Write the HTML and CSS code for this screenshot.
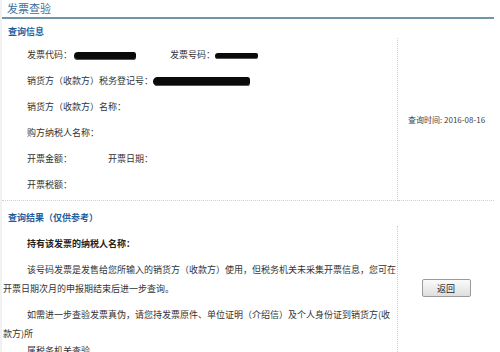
FILE: index.html
```html
<!DOCTYPE html>
<html lang="zh">
<head>
    <meta charset="UTF-8">
    <title>发票查验</title>
    <link rel="stylesheet" href="styles.css">
</head>
<body>
    <div class="page">
        <div class="title">发票查验</div>

        <div class="section">
            <div class="sec-head">查询信息</div>
            <div class="sec-body">
                <div class="main info">
                    <div class="row">
                        <span class="field field-code">发票代码：<span class="mask mask-code"></span></span><span class="field">发票号码：<span class="mask mask-no"></span></span>
                    </div>
                    <div class="row">销货方（收款方）税务登记号：<span class="mask mask-tax"></span></div>
                    <div class="row">销货方（收款方）名称：</div>
                    <div class="row">购方纳税人名称：</div>
                    <div class="row">
                        <span class="field field-amount">开票金额：</span><span class="field">开票日期：</span>
                    </div>
                    <div class="row">开票税额：</div>
                </div>
                <div class="side side-time">查询时间: 2016-08-16</div>
            </div>
        </div>

        <div class="section">
            <div class="sec-head">查询结果（仅供参考）</div>
            <div class="sec-body">
                <div class="main result">
                    <p class="owner">持有该发票的纳税人名称：</p>
                    <p>该号码发票是发售给您所输入的销货方（收款方）使用，但税务机关未采集开票信息，您可在开票日期次月的申报期结束后进一步查询。</p>
                    <p>如需进一步查验发票真伪，请您持发票原件、单位证明（介绍信）及个人身份证到销货方(收款方)所</p>
                    <p class="tail">属税务机关查验。</p>
                </div>
                <div class="side side-back">
                    <button>返回</button>
                </div>
            </div>
        </div>
    </div>
</body>
</html>
```

FILE: styles.css
```css
:root {
    --blue: #1d5e9e;
    --title: #3a6e9c;
    --rule: #7196a8;
    --text: #333333;
    --muted: #3f3f3f;
    --dots: #cfcfcf;
}

body {
    margin: 0;
    font-family: "Noto Sans CJK SC", "Noto Sans", sans-serif;
    font-size: 9px;
    color: var(--text);
    background: #ffffff;
}

.page {
    width: 494px;
    border-left: 2px solid #f1f1f1;
    box-sizing: border-box;
}

.title {
    height: 17px;
    line-height: 17px;
    padding-left: 5px;
    font-size: 11px;
    color: var(--title);
    border-bottom: 2px solid var(--rule);
}

.sec-head {
    padding: 7px 0 0 6px;
    line-height: 12px;
    font-weight: bold;
    color: var(--blue);
}

.section + .section .sec-head {
    padding-top: 11px;
    padding-bottom: 2px;
}

.sec-body {
    display: flex;
}

.main {
    flex: none;
    width: 396px;
    box-sizing: border-box;
    border-right: 1px dotted var(--dots);
}

.info {
    padding: 4px 0 2px 25px;
    border-bottom: 1px dotted var(--dots);
}

.row {
    height: 26px;
    line-height: 26px;
    white-space: nowrap;
}

.field {
    display: inline-block;
}

.field-code {
    width: 143px;
}

.field-amount {
    width: 81px;
}

.mask {
    display: inline-block;
    vertical-align: middle;
    height: 8px;
    background: #0a0a0a;
    border-radius: 5px 3px 4px 5px;
    box-shadow: inset 0 -2px 0 -1px #555;
}

.mask-code {
    width: 62px;
    margin-left: 2px;
}

.mask-no {
    width: 43px;
    height: 6px;
}

.mask-tax {
    width: 97px;
    height: 9px;
}

.side {
    flex: 1;
    display: flex;
    white-space: nowrap;
}

.side-time {
    align-items: center;
    padding-left: 10px;
    font-size: 8px;
    color: var(--muted);
    border-bottom: 1px dotted var(--dots);
}

.side-back {
    justify-content: center;
    align-items: flex-start;
    padding-top: 53px;
}

.result {
    padding: 8px 0 0 1px;
    height: 126px;
}

.result p {
    margin: 7px 0 0;
    line-height: 19px;
    text-indent: 24px;
}

.result .owner {
    margin-top: 0;
    font-weight: bold;
    color: #222222;
}

.result .tail {
    margin-top: 0;
    line-height: 15px;
}

button {
    width: 49px;
    height: 18px;
    padding: 0;
    font-family: inherit;
    font-size: 9px;
    color: #222222;
    background: linear-gradient(#fbfbfb, #dedede);
    border: 1px solid #9a9a9a;
    border-radius: 2px;
}
```
